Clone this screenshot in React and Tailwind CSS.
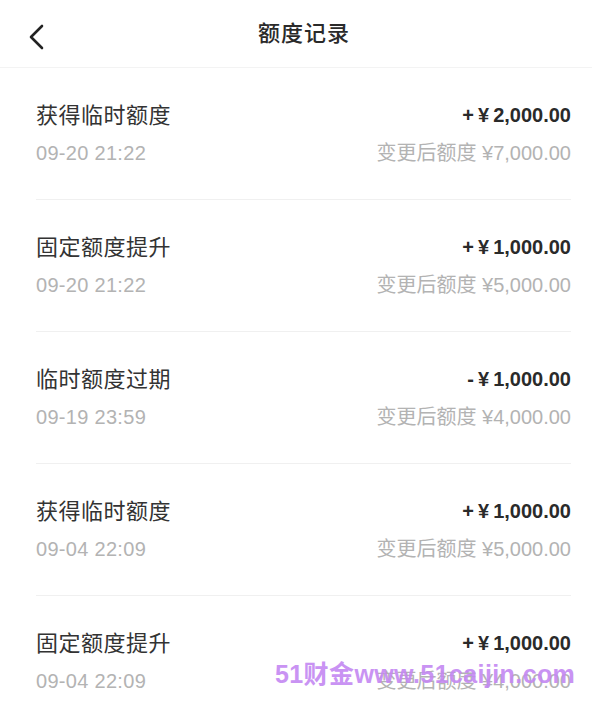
import React from 'react';

const records = [
    { title: '获得临时额度', time: '09-20 21:22', sign: '+', amount: '2,000.00', after: '7,000.00' },
    { title: '固定额度提升', time: '09-20 21:22', sign: '+', amount: '1,000.00', after: '5,000.00' },
    { title: '临时额度过期', time: '09-19 23:59', sign: '-', amount: '1,000.00', after: '4,000.00' },
    { title: '获得临时额度', time: '09-04 22:09', sign: '+', amount: '1,000.00', after: '5,000.00' },
    { title: '固定额度提升', time: '09-04 22:09', sign: '+', amount: '1,000.00', after: '4,000.00' },
];

const font = { fontFamily: '"Liberation Sans", "Noto Sans CJK SC", sans-serif' };

const App = () => {
    return (
        <div className="relative w-[592px] h-[703px] overflow-hidden bg-white" style={font}>
            <div className="relative flex items-center justify-center h-[68px] border-b border-[#f3f3f3]">
                <button className="absolute left-[24px] top-[22px] w-[24px] h-[30px] flex items-center justify-center">
                    <svg width="18" height="28" viewBox="0 0 18 28" fill="none">
                        <path d="M15 3 L4 14 L15 25" stroke="#222" strokeWidth="2.6" strokeLinecap="round" strokeLinejoin="round" />
                    </svg>
                </button>
                <h1 className="pl-[16px] text-[22px] leading-[30px] font-medium text-[#2a2a2a] tracking-[1px]">额度记录</h1>
            </div>

            <div className="pl-[36px] pr-[21px]">
                {records.map((r, i) => (
                    <div key={i} className="pt-[32px] pb-[32px] border-b border-[#f0f0f0]">
                        <div className="flex items-center justify-between h-[30px]">
                            <span className="text-[22px] text-[#333] tracking-[0.5px]">{r.title}</span>
                            <span className="text-[20px] font-semibold text-[#2a2a2a]">
                                {r.sign}<span className="ml-[4px]">¥</span><span className="ml-[4px]">{r.amount}</span>
                            </span>
                        </div>
                        <div className="flex items-center justify-between h-[28px] mt-[9px] text-[#b3b3b3]">
                            <span className="text-[20px] tracking-[0.3px]">{r.time}</span>
                            <span className="text-[20px]">变更后额度 ¥{r.after}</span>
                        </div>
                    </div>
                ))}
            </div>

            <div className="absolute left-[275px] top-[659px] text-[25px] leading-[30px] font-bold tracking-[0.4px] text-[#c488f2] opacity-90 pointer-events-none">
                51财金www.51caijin.com
            </div>
        </div>
    );
};

export default App;
